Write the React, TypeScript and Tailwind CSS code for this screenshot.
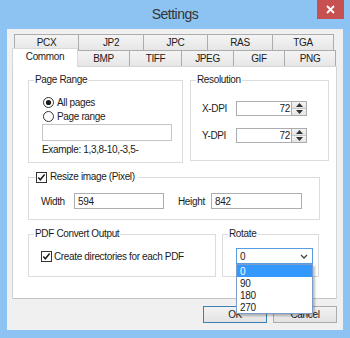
import React from "react";

const tab =
  "flex items-center justify-center border border-[#acacac] bg-linear-to-b from-[#f4f4f4] to-[#e6e6e6] -ml-px first:ml-0";
const tab2 =
  "flex items-center justify-center border-t border-l border-r border-[#acacac] bg-linear-to-b from-[#f4f4f4] to-[#e6e6e6] -ml-px h-[16px]";

function GroupTitle({ children }: { children: React.ReactNode }) {
  return (
    <span className="absolute -top-[7px] left-[5px] bg-white px-[1px] leading-[12px] flex items-center">
      {children}
    </span>
  );
}

function CheckBox() {
  return (
    <svg width="11" height="11" viewBox="0 0 11 11" className="shrink-0">
      <rect x="0.5" y="0.5" width="10" height="10" fill="#fff" stroke="#333" />
      <path d="M2.3 5.6 L4.3 7.8 L8.6 2.6" fill="none" stroke="#1a1a1a" strokeWidth="1.5" />
    </svg>
  );
}

function Radio({ on }: { on?: boolean }) {
  return (
    <svg width="11" height="11" viewBox="0 0 11 11" className="shrink-0">
      <circle cx="5.5" cy="5.5" r="5" fill="#fff" stroke="#333" />
      {on && <circle cx="5.5" cy="5.5" r="2.6" fill="#1a1a1a" />}
    </svg>
  );
}

function Spin() {
  return (
    <div className="flex flex-col w-[15px] h-[15px] border-t border-r border-b border-[#acacac] bg-[#f0f0f0]">
      <div className="flex-1 flex items-center justify-center border-b border-[#c8c8c8] bg-linear-to-b from-[#f4f4f4] to-[#e4e4e4]">
        <svg width="7" height="4" viewBox="0 0 7 4"><path d="M0 4 L3.5 0 L7 4 Z" fill="#333" /></svg>
      </div>
      <div className="flex-1 flex items-center justify-center bg-linear-to-b from-[#f4f4f4] to-[#e4e4e4]">
        <svg width="7" height="4" viewBox="0 0 7 4"><path d="M0 0 L3.5 4 L7 0 Z" fill="#333" /></svg>
      </div>
    </div>
  );
}

export default function App() {
  return (
    <div className="w-[350px] h-[338px] bg-[#8cc3f2] flex flex-col font-['Liberation_Sans',Arial,sans-serif] text-[10px] tracking-[-0.35px] text-[#1b1b1b] overflow-hidden">
      {/* Title bar */}
      <div className="relative h-[29px] flex items-center justify-center shrink-0">
        <span className="text-[14px] tracking-[-0.5px] text-[#333] -mt-[1px]">Settings</span>
        <div className="absolute right-[6px] top-0 w-[27px] h-[19px] bg-[#c75050] flex items-center justify-center">
          <svg width="9" height="9" viewBox="0 0 9 9">
            <path d="M1 1 L8 8 M8 1 L1 8" stroke="#fff" strokeWidth="1.8" />
          </svg>
        </div>
      </div>

      {/* Client */}
      <div className="mx-[7px] mb-[8px] flex-1 bg-[#f0f0f0] flex flex-col pt-[5px] pl-[5px]">
        {/* Tab row 1 */}
        <div className="flex h-[17px] ml-[2px]">
          <div className={tab + " w-[65px]"}>PCX</div>
          <div className={tab + " w-[66px]"}>JP2</div>
          <div className={tab + " w-[65px]"}>JPC</div>
          <div className={tab + " w-[66px]"}>RAS</div>
          <div className={tab + " w-[62px]"}>TGA</div>
        </div>
        {/* Tab row 2 */}
        <div className="flex items-start h-[16px] -mt-px">
          <div className="relative z-10 -mt-[2px] w-[66px] h-[19px] bg-white border-t border-l border-r border-[#d9d9d9] flex items-center justify-center pb-[3px]">
            Common
          </div>
          <div className={tab2 + " w-[53px]"}>BMP</div>
          <div className={tab2 + " w-[53px]"}>TIFF</div>
          <div className={tab2 + " w-[53px]"}>JPEG</div>
          <div className={tab2 + " w-[52px]"}>GIF</div>
          <div className={tab2 + " w-[52px]"}>PNG</div>
        </div>

        {/* Panel */}
        <div className="w-[325px] h-[233px] bg-white border border-[#d5d5d5] border-b-[#c4c4c4] flex flex-col pt-[13px] pl-[15px]">
          <div className="flex">
            {/* Page Range */}
            <div className="relative w-[155px] h-[83px] border border-[#dcdcdc] flex flex-col pl-[13px] pt-[15px]">
              <GroupTitle>Page Range</GroupTitle>
              <div className="flex items-center h-[13px] gap-[3px] ml-[1px]">
                <Radio on />
                <span>All pages</span>
              </div>
              <div className="flex items-center h-[13px] gap-[3px] ml-[1px] mt-[1px]">
                <Radio />
                <span>Page range</span>
              </div>
              <div className="mt-[1px] w-[130px] h-[17px] border border-[#c5c5c5] bg-white" />
              <div className="mt-[3px] leading-[12px]">Example: 1,3,8-10,-3,5-</div>
            </div>
            {/* Resolution */}
            <div className="relative ml-[7px] w-[139px] h-[81px] border border-[#dcdcdc] flex flex-col pl-[11px] pt-[20px]">
              <GroupTitle>Resolution</GroupTitle>
              <div className="flex items-center h-[15px]">
                <span className="w-[34px]">X-DPI</span>
                <div className="w-[56px] h-[15px] border border-[#abadb3] bg-white flex items-center justify-end pr-[1px]">72</div>
                <Spin />
              </div>
              <div className="flex items-center h-[15px] mt-[12px]">
                <span className="w-[34px]">Y-DPI</span>
                <div className="w-[56px] h-[15px] border border-[#abadb3] bg-white flex items-center justify-end pr-[1px]">72</div>
                <Spin />
              </div>
            </div>
          </div>

          {/* Resize */}
          <div className="relative mt-[14px] w-[292px] h-[43px] border border-[#dcdcdc] flex items-center pl-[12px] pt-[5px]">
            <span className="absolute -top-[7px] left-[7px] bg-white pr-[3px] leading-[12px] flex items-center gap-[3px]">
              <CheckBox />
              <span>Resize image (Pixel)</span>
            </span>
            <span className="w-[33px]">Width</span>
            <div className="w-[90px] h-[16px] border border-[#abadb3] bg-white flex items-center pl-[3px]">594</div>
            <span className="ml-[14px] w-[33px]">Height</span>
            <div className="w-[91px] h-[16px] border border-[#abadb3] bg-white flex items-center pl-[3px]">842</div>
          </div>

          {/* Bottom row */}
          <div className="flex mt-[14px]">
            <div className="relative w-[188px] h-[43px] border border-[#dcdcdc] flex items-start pl-[12px] pt-[14px]">
              <GroupTitle>PDF Convert Output</GroupTitle>
              <div className="flex items-center gap-[2px]">
                <CheckBox />
                <span>Create directories for each PDF</span>
              </div>
            </div>
            <div className="relative ml-[6px] w-[97px] h-[43px] border border-[#dcdcdc] pl-[13px] pt-[13px]">
              <GroupTitle>Rotate</GroupTitle>
              <div className="relative w-[77px]">
                <div className="h-[16px] border border-[#569de5] bg-white flex items-center justify-between pl-[3px] pr-[4px]">
                  <span>0</span>
                  <svg width="8" height="5" viewBox="0 0 8 5">
                    <path d="M1 1 L4 4 L7 1" fill="none" stroke="#444" strokeWidth="1.3" />
                  </svg>
                </div>
                <div className="absolute left-0 top-[16px] w-[77px] z-20 bg-white border border-[#7a9ec9] shadow-[2px_2px_2px_rgba(0,0,0,0.25)] flex flex-col py-0">
                  <div className="h-[12px] bg-[#3399ff] text-white pl-[3px] flex items-center">0</div>
                  <div className="h-[12px] pl-[3px] flex items-center">90</div>
                  <div className="h-[12px] pl-[3px] flex items-center">180</div>
                  <div className="h-[12px] pl-[3px] flex items-center">270</div>
                </div>
              </div>
            </div>
          </div>
        </div>

        {/* Buttons */}
        <div className="flex justify-end gap-[6px] pr-[6px] mt-[7px]">
          <div className="w-[64px] h-[17px] border border-[#3c7fb1] bg-linear-to-b from-[#f2f2f2] to-[#e3e3e3] flex items-center justify-center">OK</div>
          <div className="w-[64px] h-[17px] border border-[#acacac] bg-linear-to-b from-[#f2f2f2] to-[#e3e3e3] flex items-center justify-center">Cancel</div>
        </div>
      </div>
    </div>
  );
}
